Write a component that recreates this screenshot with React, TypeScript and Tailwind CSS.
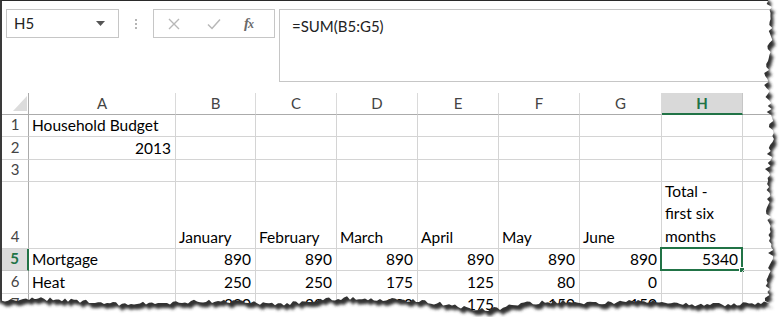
import React from "react";

const colLetters = ["A", "B", "C", "D", "E", "F", "G", "H", "I"];
const rowHeights = ["h-[22px]", "h-[23px]", "h-[22px]", "h-[67px]", "h-[22px]", "h-[23px]", "h-[22px]"];

type Cell = { v?: string; num?: boolean; lines?: string[] };

const rows: Cell[][] = [
  [{ v: "Household Budget" }],
  [{ v: "2013", num: true }],
  [],
  [
    {},
    { v: "January" },
    { v: "February" },
    { v: "March" },
    { v: "April" },
    { v: "May" },
    { v: "June" },
    { lines: ["Total -", "first six", "months"] },
  ],
  [
    { v: "Mortgage" },
    { v: "890", num: true },
    { v: "890", num: true },
    { v: "890", num: true },
    { v: "890", num: true },
    { v: "890", num: true },
    { v: "890", num: true },
    { v: "5340", num: true },
  ],
  [
    { v: "Heat" },
    { v: "250", num: true },
    { v: "250", num: true },
    { v: "175", num: true },
    { v: "125", num: true },
    { v: "80", num: true },
    { v: "0", num: true },
  ],
  [
    { v: "Power" },
    { v: "220", num: true },
    { v: "225", num: true },
    { v: "200", num: true },
    { v: "175", num: true },
    { v: "150", num: true },
    { v: "150", num: true },
  ],
];

// torn paper edge
function rand(seed: number) {
  let s = seed;
  return () => {
    s = (s * 16807) % 2147483647;
    return s / 2147483647;
  };
}

const bottomProfile: [number, number][] = [
  [-5, 300], [40, 299], [80, 301], [120, 304], [160, 303], [200, 301], [240, 302],
  [280, 304], [310, 302], [340, 298], [380, 299], [420, 301], [450, 305], [480, 310],
  [500, 308], [520, 303], [560, 302], [600, 303], [640, 301], [680, 304], [720, 305],
  [760, 303], [772, 301],
];

function profileAt(x: number) {
  for (let i = 0; i < bottomProfile.length - 1; i++) {
    const [x0, y0] = bottomProfile[i];
    const [x1, y1] = bottomProfile[i + 1];
    if (x >= x0 && x <= x1) return y0 + ((y1 - y0) * (x - x0)) / (x1 - x0);
  }
  return 300;
}

function paperPoints() {
  const r = rand(11);
  const pts: string[] = ["-5,-5"];
  for (let y = -5; y <= 301; y += 3) {
    const x = 769 + Math.sin(y / 17) * 2 + (r() - 0.5) * 6;
    pts.push(`${x.toFixed(1)},${y}`);
  }
  for (let x = 770; x >= -5; x -= 3) {
    const y = profileAt(x) + (r() - 0.5) * 4;
    pts.push(`${x},${y.toFixed(1)}`);
  }
  return pts.join(" ");
}

function TornEdge() {
  const pts = paperPoints();
  return (
    <svg className="absolute inset-0 pointer-events-none" width={780} height={317}>
      <defs>
        <filter id="sh" x="-10%" y="-10%" width="120%" height="120%">
          <feGaussianBlur stdDeviation="1.8" />
        </filter>
        <mask id="outside">
          <rect x={0} y={0} width={780} height={317} fill="white" />
          <polygon points={pts} fill="black" />
        </mask>
      </defs>
      <g mask="url(#outside)">
        <rect x={0} y={0} width={780} height={317} fill="white" />
        <polygon points={pts} transform="translate(3,5)" fill="#333" filter="url(#sh)" />
      </g>
    </svg>
  );
}

function Toolbar() {
  return (
    <div className="flex items-start h-[92px] pt-2 pl-1">
      <div className="w-[113px] h-[29px] border border-[#c6c6c6] flex items-center justify-between pl-[7px] pr-[13px] text-[15px] text-[#222]">
        <span>H5</span>
        <svg width="9" height="5" viewBox="0 0 9 5">
          <path d="M0 0 L9 0 L4.5 5 Z" fill="#555" />
        </svg>
      </div>
      <div className="w-[34px] h-[29px] flex flex-col items-center justify-center gap-[2px]">
        <span className="w-[2px] h-[2px] bg-[#b5b5b5]" />
        <span className="w-[2px] h-[2px] bg-[#b5b5b5]" />
        <span className="w-[2px] h-[2px] bg-[#b5b5b5]" />
      </div>
      <div className="w-[122px] h-[29px] border border-[#c6c6c6] flex items-center pl-[14px]">
        <svg width="12" height="12" viewBox="0 0 12 12" className="mr-[27px]">
          <path d="M1 1 L11 11 M11 1 L1 11" stroke="#b8b8b8" strokeWidth="1.4" />
        </svg>
        <svg width="14" height="12" viewBox="0 0 14 12" className="mr-[23px]">
          <path d="M1 6.5 L5 10.5 L13 1.5" stroke="#b8b8b8" strokeWidth="1.5" fill="none" />
        </svg>
        <span className="text-[15px] italic font-bold text-[#6a6a6a] tracking-[-1px] [font-family:'Liberation_Serif',serif]">
          f<span className="text-[12px]">x</span>
        </span>
      </div>
      <div className="ml-[4px] flex-1 h-[73px] border border-[#c6c6c6] pl-[12px] pt-[5px] text-[15px] text-[#222]">
        =SUM(B5:G5)
      </div>
    </div>
  );
}

function Grid() {
  return (
    <div className="grid grid-cols-[27px_147px_80px_81px_81px_81px_81px_82px_81px_1fr]">
      <div className="h-[22px] border-r border-b border-[#ababab] relative">
        <svg className="absolute left-[11px] top-[3px]" width="14" height="15" viewBox="0 0 14 15">
          <path d="M14 0 L14 15 L0 15 Z" fill="#dcdcdc" />
        </svg>
      </div>
      {colLetters.map((c) =>
        c === "H" ? (
          <div
            key={c}
            className="h-[22px] bg-[#d9d9d9] border-r border-[#c6c6c6] border-b-2 border-b-[#217346] flex items-center justify-center text-[15px] font-bold text-[#217346]"
          >
            {c}
          </div>
        ) : (
          <div
            key={c}
            className="h-[22px] border-r border-r-[#dadada] border-b border-b-[#ababab] flex items-center justify-center text-[15px] text-[#444]"
          >
            {c}
          </div>
        ),
      )}
      {rows.map((row, ri) => (
        <React.Fragment key={ri}>
          {ri === 4 ? (
            <div className={`${rowHeights[ri]} bg-[#dcdcdc] border-r-2 border-r-[#217346] border-b border-b-[#c6c6c6] flex items-end justify-center pb-[1px] text-[15px] font-bold text-[#217346]`}>
              {ri + 1}
            </div>
          ) : (
            <div className={`${rowHeights[ri]} border-r border-r-[#ababab] border-b border-b-[#d4d4d4] flex items-end justify-center pb-[1px] text-[15px] text-[#444]`}>
              {ri + 1}
            </div>
          )}
          {colLetters.map((c, ci) => {
            const cell = row[ci] || {};
            const selected = ri === 4 && c === "H";
            return (
              <div
                key={c}
                className={`${rowHeights[ri]} relative border-r border-b border-[#d4d4d4] flex items-end pb-[1px] text-[15.5px] text-black leading-[20px] ${
                  cell.num ? "justify-end pr-[4px]" : "justify-start pl-[3px]"
                }`}
              >
                {cell.lines ? (
                  <div className="flex flex-col leading-[22.5px]">
                    {cell.lines.map((l) => (
                      <span key={l}>{l}</span>
                    ))}
                  </div>
                ) : (
                  <span className="whitespace-nowrap">{cell.v}</span>
                )}
                {selected && (
                  <div className="absolute -left-[2px] -top-[2px] -right-[1px] -bottom-[1px] border-2 border-[#217346]">
                    <div className="absolute -right-[4px] -bottom-[4px] w-[6px] h-[6px] bg-[#217346] border border-white" />
                  </div>
                )}
              </div>
            );
          })}
        </React.Fragment>
      ))}
    </div>
  );
}

export default function App() {
  return (
    <div className="w-[780px] h-[317px] relative overflow-hidden bg-white">
      <div className="w-[820px] h-[340px] border-t border-t-[#2a2a2a] border-l-2 border-l-[#3a3a3a] [font-family:Lato,'Liberation_Sans',sans-serif]">
        <Toolbar />
        <Grid />
      </div>
      <TornEdge />
    </div>
  );
}
